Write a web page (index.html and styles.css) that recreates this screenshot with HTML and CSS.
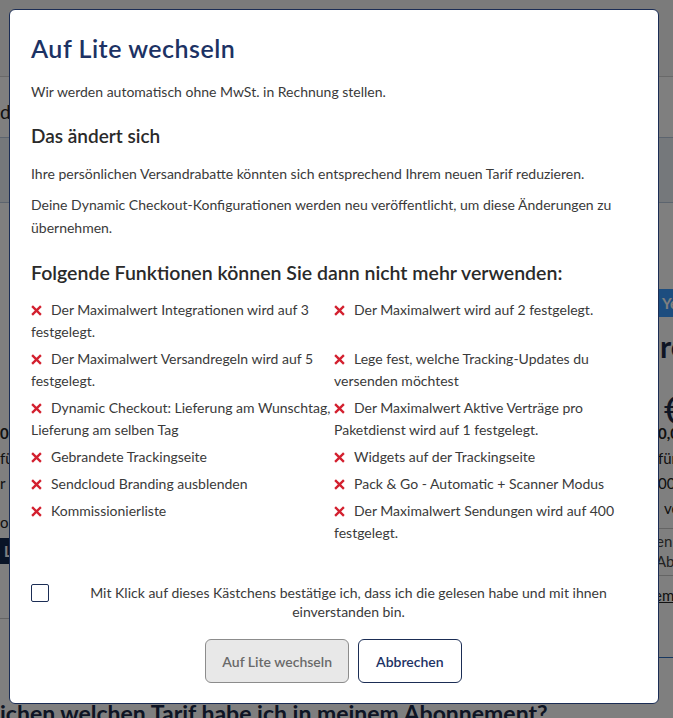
FILE: index.html
```html
<!DOCTYPE html>
<html lang="de">
<head>
<meta charset="utf-8">
<title>Auf Lite wechseln</title>
<link rel="stylesheet" href="styles.css">
</head>
<body>
<div class="page">
  <header class="topbar"></header>
  <div class="subnav"><span class="subnav-text">der Tarif</span></div>
  <div class="band"></div>
  <div class="spacer"></div>
  <div class="plans">
    <div class="plan plan-left">
      <div class="plan-price-sub">0,00 € / Monat</div>
      <div class="plan-line">für einen Monat</div>
      <div class="plan-line">r alle Sendungen</div>
      <div class="plan-line plan-gap">on</div>
      <div class="plan-btn">Lite</div>
      <div class="plan-rule"></div>
    </div>
    <div class="plan-mid"></div>
    <div class="plan plan-right">
      <div class="plan-tab">Yearly</div>
      <div class="plan-name">re</div>
      <div class="plan-price">€</div>
      <div class="plan-price-sub">0,00</div>
      <div class="plan-line">für</div>
      <div class="plan-line">000</div>
      <div class="plan-line plan-indent">ve</div>
      <div class="plan-row"><div>en</div><div>Ab</div></div>
      <div class="plan-link">em</div>
    </div>
  </div>
  <h2 class="page-question">ichen welchen Tarif habe ich in meinem Abonnement?</h2>
</div>

<div class="overlay"></div>

<div class="modal" role="dialog" aria-labelledby="modal-title">
  <h1 class="modal-title" id="modal-title">Auf Lite wechseln</h1>
  <p class="modal-text modal-intro">Wir werden automatisch ohne MwSt. in Rechnung stellen.</p>

  <h2 class="modal-subtitle">Das ändert sich</h2>
  <p class="modal-text modal-change">Ihre persönlichen Versandrabatte könnten sich entsprechend Ihrem neuen Tarif reduzieren.</p>
  <p class="modal-text modal-change2">Deine Dynamic Checkout-Konfigurationen werden neu veröffentlicht, um diese Änderungen zu übernehmen.</p>

  <h2 class="modal-subtitle modal-subtitle-lg">Folgende Funktionen können Sie dann nicht mehr verwenden:</h2>
  <ul class="feature-list">
    <li class="feature"><svg class="x-icon" viewBox="0 0 10 10" aria-hidden="true"><path d="M1 1 9 9M9 1 1 9"/></svg>Der Maximalwert Integrationen wird auf 3 festgelegt.</li>
    <li class="feature"><svg class="x-icon" viewBox="0 0 10 10" aria-hidden="true"><path d="M1 1 9 9M9 1 1 9"/></svg>Der Maximalwert wird auf 2 festgelegt.</li>
    <li class="feature"><svg class="x-icon" viewBox="0 0 10 10" aria-hidden="true"><path d="M1 1 9 9M9 1 1 9"/></svg>Der Maximalwert Versandregeln wird auf 5 festgelegt.</li>
    <li class="feature"><svg class="x-icon" viewBox="0 0 10 10" aria-hidden="true"><path d="M1 1 9 9M9 1 1 9"/></svg>Lege fest, welche Tracking-Updates du versenden möchtest</li>
    <li class="feature"><svg class="x-icon" viewBox="0 0 10 10" aria-hidden="true"><path d="M1 1 9 9M9 1 1 9"/></svg>Dynamic Checkout: Lieferung am Wunschtag, Lieferung am selben Tag</li>
    <li class="feature"><svg class="x-icon" viewBox="0 0 10 10" aria-hidden="true"><path d="M1 1 9 9M9 1 1 9"/></svg>Der Maximalwert Aktive Verträge pro Paketdienst wird auf 1 festgelegt.</li>
    <li class="feature"><svg class="x-icon" viewBox="0 0 10 10" aria-hidden="true"><path d="M1 1 9 9M9 1 1 9"/></svg>Gebrandete Trackingseite</li>
    <li class="feature"><svg class="x-icon" viewBox="0 0 10 10" aria-hidden="true"><path d="M1 1 9 9M9 1 1 9"/></svg>Widgets auf der Trackingseite</li>
    <li class="feature"><svg class="x-icon" viewBox="0 0 10 10" aria-hidden="true"><path d="M1 1 9 9M9 1 1 9"/></svg>Sendcloud Branding ausblenden</li>
    <li class="feature"><svg class="x-icon" viewBox="0 0 10 10" aria-hidden="true"><path d="M1 1 9 9M9 1 1 9"/></svg>Pack &amp; Go - Automatic + Scanner Modus</li>
    <li class="feature"><svg class="x-icon" viewBox="0 0 10 10" aria-hidden="true"><path d="M1 1 9 9M9 1 1 9"/></svg>Kommissionierliste</li>
    <li class="feature"><svg class="x-icon" viewBox="0 0 10 10" aria-hidden="true"><path d="M1 1 9 9M9 1 1 9"/></svg>Der Maximalwert Sendungen wird auf 400 festgelegt.</li>
  </ul>

  <label class="confirm">
    <input type="checkbox" class="confirm-box">
    <span class="confirm-text">Mit Klick auf dieses Kästchens bestätige ich, dass ich die gelesen habe und mit ihnen einverstanden bin.</span>
  </label>

  <div class="actions">
    <button class="btn btn-disabled" type="button" disabled>Auf Lite wechseln</button>
    <button class="btn btn-outline" type="button">Abbrechen</button>
  </div>
</div>
</body>
</html>
```
FILE: styles.css
```css
* {
  box-sizing: border-box;
}

html, body {
  margin: 0;
  padding: 0;
}

body {
  width: 673px;
  height: 718px;
  overflow: hidden;
  background: #ffffff;
  font-family: "Lato", "Noto Sans", sans-serif;
  color: #333333;
  position: relative;
}

/* ---------- background page ---------- */
.page {
  width: 673px;
}

.topbar {
  height: 77px;
  border-bottom: 1px solid #d2d2d2;
  background: #f6f6f6;
}

.subnav {
  height: 61px;
  border-bottom: 1px solid #b9c8dc;
  display: flex;
  align-items: center;
  font-size: 19px;
  color: #222;
}

.subnav-text {
  padding-top: 8px;
}

.band {
  height: 65px;
  background: #ebf0f7;
  border-bottom: 1px solid #b9c8dc;
}

.spacer {
  height: 86px;
}

.plans {
  display: grid;
  grid-template-columns: 120px 1fr 23px;
  height: 370px;
}

.plan {
  overflow: hidden;
  white-space: nowrap;
  font-size: 15px;
  color: #222;
}

.plan-left {
  padding-top: 132px;
}

.plan-right {
  padding-top: 0;
  border-bottom: 1px solid #2f6fc0;
  height: 369px;
}

.plan-tab {
  height: 28px;
  background: #3a9bff;
  color: #ffffff;
  font-weight: 700;
  font-size: 15px;
  line-height: 28px;
  padding-left: 12px;
}

.plan-name {
  padding-left: 10px;
  font-size: 30px;
  font-weight: 700;
  line-height: 38px;
  margin-top: 10px;
  color: #1c2a48;
}

.plan-price {
  padding-left: 14px;
  font-size: 38px;
  line-height: 44px;
  margin-top: 22px;
  color: #1c2a48;
}

.plan-right .plan-price-sub,
.plan-right .plan-line {
  padding-left: 8px;
}

.plan-right .plan-price-sub {
  margin-top: -10px;
}

.plan-price-sub {
  font-weight: 700;
  font-size: 15px;
  line-height: 24px;
}

.plan-line {
  line-height: 23px;
  margin-top: 2px;
}

.plan-right .plan-indent {
  padding-left: 14px;
}

.plan-gap {
  margin-top: 16px;
}

.plan-btn {
  margin-top: 4px;
  height: 26px;
  background: #13284e;
  color: #ffffff;
  font-weight: 700;
  line-height: 26px;
  padding-left: 4px;
}

.plan-rule {
  margin-top: 54px;
  border-top: 1px solid #c8c8c8;
}

.plan-row {
  margin-top: 8px;
  border-top: 1px solid #c8c8c8;
  border-bottom: 1px solid #c8c8c8;
  padding: 2px 0 4px 6px;
  line-height: 20px;
  color: #444;
}

.plan-link {
  padding-left: 4px;
  margin-top: 10px;
  text-decoration: underline;
  color: #222;
}

.page-question {
  margin: 40px 0 0;
  font-size: 23px;
  line-height: 28px;
  font-weight: 700;
  white-space: nowrap;
  color: #1c2a48;
}

/* ---------- overlay + modal ---------- */
.overlay {
  position: absolute;
  inset: 0;
  background: rgba(0, 0, 0, 0.5);
}

.modal {
  position: absolute;
  top: 9px;
  left: 9px;
  width: 650px;
  background: #ffffff;
  border: 1px solid #1b2d55;
  border-radius: 6px;
  padding: 24px 22px 20px 21px;
}

.modal-title {
  margin: 0;
  font-size: 25px;
  line-height: 29px;
  letter-spacing: 0.5px;
  font-weight: 600;
  color: #1c3264;
}

.modal-text {
  margin: 0;
  font-size: 14px;
  line-height: 23px;
  color: #3a3a3a;
}

.modal-intro {
  margin-top: 17px;
}

.modal-subtitle {
  margin: 21px 0 0;
  font-size: 19px;
  line-height: 24px;
  font-weight: 600;
  color: #2a2a2a;
}

.modal-subtitle-lg {
  margin-top: 21px;
  font-size: 19.5px;
  line-height: 26px;
}

.modal-change {
  margin-top: 14px;
}

.modal-change2 {
  margin-top: 8px;
}

.feature-list {
  list-style: none;
  margin: 13px 0 0;
  padding: 0;
  display: grid;
  grid-template-columns: 303px 1fr;
  row-gap: 5px;
}

.feature {
  font-size: 14px;
  line-height: 22px;
  color: #3a3a3a;
}

.x-icon {
  width: 11px;
  height: 11px;
  margin-left: 0;
  margin-right: 9px;
  vertical-align: -1px;
  fill: none;
  stroke: #d3202f;
  stroke-width: 2.1;
  stroke-linecap: butt;
}

.confirm {
  display: flex;
  align-items: flex-start;
  gap: 12px;
  margin-top: 39px;
}

.confirm-box {
  appearance: none;
  -webkit-appearance: none;
  margin: 1px 0 0;
  width: 18px;
  height: 18px;
  flex: 0 0 18px;
  border: 1.5px solid #1b2d55;
  border-radius: 2px;
  background: #ffffff;
}

.confirm-text {
  flex: 1;
  text-align: center;
  font-size: 14px;
  line-height: 19px;
  color: #3a3a3a;
}

.actions {
  display: flex;
  justify-content: center;
  gap: 9px;
  margin-top: 18px;
}

.btn {
  height: 44px;
  padding: 0 16px;
  border-radius: 6px;
  font-family: inherit;
  font-size: 14px;
  font-weight: 600;
}

.btn-disabled {
  background: #e8e8e8;
  border: 1px solid #8c8c8c;
  color: #6a6a6a;
}

.btn-outline {
  background: #ffffff;
  border: 1px solid #1b2d55;
  color: #1c3264;
  padding: 0 17px;
}
```
